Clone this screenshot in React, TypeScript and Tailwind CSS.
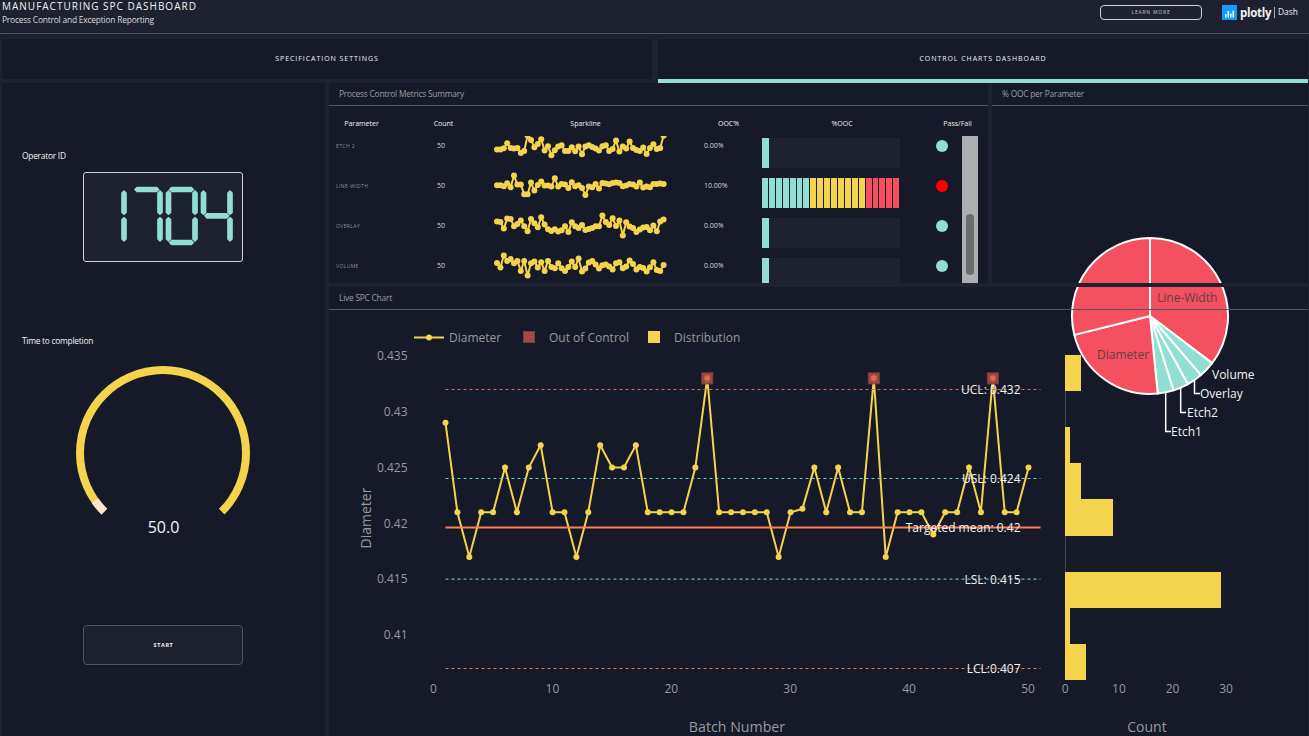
import React from "react";

const AQUA = "#91dfd2";
const YELLOW = "#f4d44d";
const RED = "#f45060";

/* ---------- data ---------- */

type Metric = { name: string; ooc: string; level: number; pass: boolean; points: number[] };

const METRICS: Metric[] = [
  {
    name: "ETCH 2", ooc: "0.00%", level: 1, pass: true,
    points: [207, 207, 203, 188, 202, 204, 202, 217, 211, 165, 178, 200, 190, 176, 210, 197, 224, 209, 198, 194, 211, 211, 200, 212, 198, 221, 198, 194, 199, 204, 210, 197, 194, 211, 205, 180, 213, 198, 204, 183, 202, 208, 211, 201, 220, 202, 191, 205, 202, 165].map((v) => v - 198),
  },
  {
    name: "LINE-WIDTH", ooc: "10.00%", level: 20, pass: false,
    points: [314, 314, 317, 308, 320, 285, 312, 312, 341, 341, 306, 330, 313, 303, 315, 315, 318, 293, 318, 310, 312, 322, 305, 317, 314, 322, 343, 318, 320, 310, 324, 307, 309, 311, 307, 306, 307, 317, 315, 310, 312, 318, 306, 321, 318, 320, 310, 310, 309, 310].map((v) => v - 318),
  },
  {
    name: "OVERLAY", ooc: "0.00%", level: 1, pass: true,
    points: [423, 424, 444, 414, 415, 437, 430, 420, 437, 452, 415, 428, 440, 410, 432, 446, 451, 446, 453, 449, 437, 454, 425, 437, 442, 433, 448, 445, 442, 437, 437, 405, 424, 433, 413, 436, 420, 465, 425, 438, 442, 454, 447, 441, 439, 449, 435, 452, 423, 417].map((v) => v - 438),
  },
  {
    name: "VOLUME", ooc: "0.00%", level: 1, pass: true,
    points: [547, 561, 525, 541, 535, 548, 541, 571, 541, 585, 548, 543, 561, 545, 571, 541, 559, 563, 548, 563, 571, 559, 543, 559, 534, 573, 564, 546, 541, 552, 564, 554, 552, 558, 567, 548, 545, 563, 558, 540, 550, 567, 559, 562, 573, 560, 545, 568, 571, 553].map((v) => v - 558),
  },
];

const DIAMETER = [
  0.429, 0.421, 0.417, 0.421, 0.421, 0.425, 0.421, 0.425, 0.427, 0.421,
  0.421, 0.417, 0.421, 0.427, 0.425, 0.425, 0.427, 0.421, 0.421, 0.421,
  0.421, 0.425, 0.433, 0.421, 0.421, 0.421, 0.421, 0.421, 0.417, 0.421,
  0.4213, 0.425, 0.421, 0.425, 0.421, 0.421, 0.433, 0.417, 0.421, 0.421,
  0.421, 0.419, 0.421, 0.421, 0.425, 0.421, 0.433, 0.421, 0.421, 0.425,
];

const BINS = [
  [355, 36, 16], [427, 36, 5], [463, 36, 16], [499, 37, 48],
  [572, 36, 156], [608, 36, 5], [644, 36, 21],
];

const Y_TICKS: [string, number][] = [
  ["0.435", 360], ["0.43", 416], ["0.425", 472], ["0.42", 528], ["0.415", 583], ["0.41", 639],
];

const LIMITS = [
  { y: 389.5, color: "#d56a50", label: "UCL: 0.432" },
  { y: 478.5, color: "#84cac0", label: "USL: 0.424" },
  { y: 579.2, color: "#6fb0a9", label: "LSL: 0.415" },
  { y: 668.5, color: "#f0714f", label: "LCL:0.407" },
];

/* ---------- small pieces ---------- */

function Sparkline({ points }: { points: number[] }) {
  const xy = points.map((v, i) => [5 + i * 3.4, 20.6 + v / 3]);
  return (
    <svg width="178" height="40" className="ml-[10px] block overflow-visible">
      <polyline points={xy.map((p) => p.join(",")).join(" ")} fill="none" stroke={YELLOW} strokeWidth="2" />
      {xy.map((p, i) => (
        <circle key={i} cx={p[0]} cy={p[1]} r="3" fill={YELLOW} />
      ))}
    </svg>
  );
}

function LevelBar({ level }: { level: number }) {
  if (level === 1) {
    return (
      <div className="h-[30px] w-[138px] bg-[#1e2130]">
        <div className="h-full w-[7px] bg-[#91dfd2]" />
      </div>
    );
  }
  return (
    <div className="flex h-[30px] w-[137px] gap-px">
      {Array.from({ length: 20 }, (_, i) => (
        <div
          key={i}
          className={i < 7 ? "flex-1 bg-[#91dfd2]" : i < 15 ? "flex-1 bg-[#f4d44d]" : "flex-1 bg-[#f45060]"}
        />
      ))}
    </div>
  );
}

function PanelTitle({ children, className = "" }: { children: React.ReactNode; className?: string }) {
  return (
    <div className={`flex h-[23px] shrink-0 items-center border-b border-[#4f5461] pl-[10px] text-[8.4px] tracking-[-0.23px] text-[#9b9c9f] ${className}`}>
      {children}
    </div>
  );
}

const hSeg = (x: number, y: number) =>
  `M${x} ${y} l8 -8.5 h61 l8 8.5 l-8 8.5 h-61 z`;
const vSeg = (x: number, y: number) =>
  `M${x} ${y} l8.5 8 v60 l-8.5 8 l-8.5 -8 v-60 z`;

function LedDisplay() {
  return (
    <svg viewBox="72 99 474 264" className="h-full w-full">
      <g fill={AQUA}>
        <path d={vSeg(192, 150)} /><path d={vSeg(192, 230)} />
        <path d={hSeg(222, 148.5)} /><path d={vSeg(300, 150)} /><path d={vSeg(300, 230)} />
        <path d={hSeg(326, 148.5)} /><path d={vSeg(405, 150)} /><path d={vSeg(405, 230)} />
        <path d={vSeg(325.5, 150)} /><path d={vSeg(325.5, 230)} /><path d={hSeg(326, 307.5)} />
        <path d={vSeg(430.5, 150)} /><path d={hSeg(432, 227.5)} /><path d={vSeg(510, 150)} /><path d={vSeg(510, 230)} />
      </g>
      <g fill="#1a1d2b">
        <circle cx="180" cy="227" r="1.5" /><circle cx="120" cy="227" r="1.5" />
        <circle cx="227" cy="237" r="1.5" /><circle cx="229" cy="300" r="1.5" />
      </g>
    </svg>
  );
}

function arc(cx: number, cy: number, r: number, from: number, to: number) {
  const p = (a: number) => {
    const t = (a * Math.PI) / 180;
    return `${cx + r * Math.cos(t)} ${cy + r * Math.sin(t)}`;
  };
  return `M${p(from)} A${r} ${r} 0 ${to - from > 180 ? 1 : 0} 1 ${p(to)}`;
}

function Gauge() {
  return (
    <svg width="180" height="180" className="mx-auto block">
      <path d={arc(90, 90, 83, 135, 405)} fill="none" stroke={YELLOW} strokeWidth="8" />
      <path d={arc(90, 90, 83, 135, 145)} fill="none" stroke="#fae7d0" strokeWidth="8" />
      <text x="90.5" y="170" textAnchor="middle" fontSize="16" fill="#f2f2f2">50.0</text>
    </svg>
  );
}

const SLICES = [
  { from: 0, to: 127.2, color: RED },
  { from: 127.2, to: 139.2, color: AQUA },
  { from: 139.2, to: 150.9, color: AQUA },
  { from: 150.9, to: 162.5, color: AQUA },
  { from: 162.5, to: 174.3, color: AQUA },
  { from: 174.3, to: 256, color: RED },
  { from: 256, to: 360, color: RED },
];

function Pie() {
  return (
    <svg viewBox="1040 225 269 230" width="269" height="230" className="block">
      {SLICES.map((s) => (
        <path
          key={s.from}
          d={`${arc(1150, 316, 78, s.from - 90, s.to - 90)} L1150 316 Z`}
          fill={s.color}
          stroke="#fff"
          strokeWidth="2"
          strokeLinejoin="round"
        />
      ))}
      <g fill="none" stroke="#fff" strokeWidth="1.5">
        <path d="M1194.5 380.5V393.5H1200" />
        <path d="M1180.7 387V412.5H1186" />
        <path d="M1165.7 393V431.5H1171" />
      </g>
      <g fontSize="12">
        <text x="1157" y="302" fill="#5c4440">Line-Width</text>
        <text x="1097" y="359" fill="#5c4440">Diameter</text>
        <g fill="#f2f2f2">
          <text x="1212" y="379">Volume</text>
          <text x="1200" y="398">Overlay</text>
          <text x="1187" y="417">Etch2</text>
          <text x="1171" y="436">Etch1</text>
        </g>
      </g>
    </svg>
  );
}

function SpcChart() {
  const pts = DIAMETER.map((v, i) => [445.5 + i * 11.898, 355.7 + (0.435 - v) * 11180]);
  return (
    <svg viewBox="329 310 980 426" width="980" height="426" className="block">
      <g fontSize="12" fill="#98999c">
        <path d="M414 337.5H444" stroke={YELLOW} strokeWidth="2" />
        <circle cx="429" cy="337.5" r="3" fill={YELLOW} />
        <text x="449" y="342">Diameter</text>
        <rect x="523.5" y="331.5" width="11" height="11" fill="#a04a49" stroke="#7b3c40" />
        <text x="549" y="342">Out of Control</text>
        <rect x="648" y="331" width="12" height="12" fill={YELLOW} />
        <text x="674" y="342">Distribution</text>
        {Y_TICKS.map(([t, y]) => (
          <text key={t} x="407.5" y={y} textAnchor="end">{t}</text>
        ))}
        {[0, 10, 20, 30, 40, 50].map((t) => (
          <text key={t} x={433.5 + t * 11.89} y="693" textAnchor="middle">{t}</text>
        ))}
        {[0, 10, 20, 30].map((t) => (
          <text key={t} x={1065.3 + t * 5.36} y="693" textAnchor="middle">{t}</text>
        ))}
      </g>
      <g fontSize="14" fill="#98999c" textAnchor="middle">
        <text x="737" y="732" fontSize="14.2">Batch Number</text>
        <text x="1147" y="732">Count</text>
        <text transform="translate(371 518) rotate(-90)">Diameter</text>
      </g>
      <path d="M1065.5 355V680" stroke="#44464d" />
      {BINS.map(([y, h, w]) => (
        <rect key={y} x="1065" y={y} width={w} height={h} fill={YELLOW} />
      ))}
      <polyline points={pts.map((p) => p.join(",")).join(" ")} fill="none" stroke={YELLOW} strokeWidth="2" />
      {pts.map((p, i) => (
        <circle key={i} cx={p[0]} cy={p[1]} r="3" fill={YELLOW} />
      ))}
      {[22, 36, 46].map((i) => (
        <g key={i}>
          <rect x={pts[i][0] - 5.5} y={pts[i][1] - 5.2} width="11" height="11" fill="#a04a49" fillOpacity="0.95" stroke="#7b3c40" />
          <circle cx={pts[i][0]} cy={pts[i][1]} r="2.8" fill="#e0684f" />
        </g>
      ))}
      {LIMITS.map((l) => (
        <path key={l.label} d={`M445.5 ${l.y}H1040.5`} stroke={l.color} strokeWidth="1.2" strokeDasharray="3 3" />
      ))}
      <path d="M445.5 527.5H1040.5" stroke="#ff7f50" strokeWidth="2" />
      <g fontSize="12" fill="#f2f2f2" textAnchor="end">
        {LIMITS.map((l) => (
          <text key={l.label} x="1020.5" y={Math.round(l.y + 4.4)}>{l.label}</text>
        ))}
        <text x="1020.5" y="532">Targeted mean: 0.42</text>
      </g>
    </svg>
  );
}

/* ---------- page ---------- */

export default function App() {
  return (
    <div className="flex h-[736px] w-[1309px] flex-col overflow-hidden bg-[#1e2130] font-['Open_Sans',sans-serif] text-[#f2f2f2]">
      <header className="flex h-[34px] shrink-0 justify-between border-b border-[#4f5461] pr-[11px] pl-[2px]">
        <div>
          <h1 className="text-[10px] leading-[13px] tracking-[1px]">MANUFACTURING SPC DASHBOARD</h1>
          <p className="text-[8.4px] leading-[14px] tracking-[-0.19px] text-[#dcdcdd]">Process Control and Exception Reporting</p>
        </div>
        <div className="flex h-[25px] items-center">
          <button className="mr-[20px] h-[15px] w-[102px] rounded-[4px] border border-[#d3d3d3] text-[5px] leading-[13px] tracking-[0.8px] text-[#c5c5c6]">
            LEARN MORE
          </button>
          <svg width="15" height="15" className="mr-[3px]">
            <rect width="15" height="15" fill="#119dff" />
            <path d="M3 9h1.5v3.5H3zM5.5 6H7v6.5H5.5zM8 8.5h1.5v4H8zM10.5 5.5H12v7h-1.5z" fill="#fff" />
          </svg>
          <span className="w-[31px] text-[11.5px] leading-none font-bold tracking-[-0.3px]">plotly</span>
          <span className="mr-[3px] ml-[3px] h-[11px] w-px bg-[#b0b1b6]" />
          <span className="w-[20px] text-[8.4px] leading-none">Dash</span>
        </div>
      </header>

      <nav className="mt-[5px] flex h-[44px] shrink-0 gap-[6px] pl-[2px] text-[7px] font-medium tracking-[0.95px]">
        <div className="flex w-[650px] items-center justify-center border-b-4 border-transparent bg-[#161a28] bg-clip-padding">
          SPECIFICATION SETTINGS
        </div>
        <div className="flex w-[650px] items-center justify-center border-b-4 border-[#91dfd2] bg-[#161a28]">
          CONTROL CHARTS DASHBOARD
        </div>
      </nav>

      <main className="flex min-h-0 flex-1 gap-[4px] pl-[2px]">
        <aside className="flex w-[323px] shrink-0 flex-col bg-[#161a28]">
          <p className="mt-[66px] h-[14px] pl-[20px] text-[8.4px] leading-[14px] tracking-[-0.25px]">Operator ID</p>
          <div className="mt-[9px] ml-[81px] h-[90px] w-[160px] rounded-[3px] border border-[#d3d3d3] bg-[#1e2130]">
            <LedDisplay />
          </div>
          <p className="mt-[72px] h-[14px] pl-[20px] text-[8.4px] leading-[14px] tracking-[-0.25px]">Time to completion</p>
          <div className="mt-[15px] h-[180px] w-[322px]">
            <Gauge />
          </div>
          <button className="mt-[82px] ml-[81px] h-[40px] w-[160px] rounded-[4px] border border-[#4b5460] bg-[#1d202d] pl-px text-[5.5px] font-bold tracking-[0.6px]">
            START
          </button>
        </aside>

        <div className="flex min-w-0 flex-1 flex-col">
          <div className="flex h-[200px] shrink-0 gap-[4px]">
            <section className="flex w-[659px] shrink-0 flex-col bg-[#161a28]">
              <PanelTitle>Process Control Metrics Summary</PanelTitle>
              <div className="flex h-[30px] w-[659px] shrink-0 items-center pt-[6px] text-center text-[7px] font-medium">
                <span className="w-[65px] shrink-0">Parameter</span>
                <span className="w-[99px] shrink-0">Count</span>
                <span className="w-[185px] shrink-0">Sparkline</span>
                <span className="w-[101px] shrink-0">OOC%</span>
                <span className="w-[126px] shrink-0">%OOC</span>
                <span className="-mr-[22px] w-[105px] shrink-0">Pass/Fail</span>
              </div>
              <div className="flex min-h-0 flex-1 overflow-hidden">
                <div className="-mt-[10px] w-[633px] shrink-0">
                  {METRICS.map((m) => (
                    <div key={m.name} className="flex h-[40px] items-center text-[7px]">
                      <span className="w-[72px] pt-px pl-[7px] text-[5px] font-medium tracking-[0.4px] text-[#909297]">{m.name}</span>
                      <span className="w-[80px] text-center text-[#d8d8da]">50</span>
                      <div className="w-[208px] pl-[1px]"><Sparkline points={m.points} /></div>
                      <span className="w-[73px] pl-[15px] text-[#d8d8da]">{m.ooc}</span>
                      <div className="w-[160px] pt-[14px]"><LevelBar level={m.level} /></div>
                      <div className="flex w-[40px] justify-center">
                        <span className={m.pass ? "size-[12px] rounded-full bg-[#91dfd2]" : "size-[12px] rounded-full bg-[#ff0000]"} />
                      </div>
                    </div>
                  ))}
                </div>
                <div className="flex w-[16px] shrink-0 justify-center bg-[#adaeb2]">
                  <div className="mt-[78px] h-[61px] w-[8px] rounded-full bg-[#6c6d71]" />
                </div>
              </div>
            </section>

            <section className="relative w-[316px] shrink-0 bg-[#161a28]">
              <PanelTitle>% OOC per Parameter</PanelTitle>
              <div className="absolute top-[142px] left-[48px] z-10">
                <Pie />
              </div>
            </section>
          </div>

          <section className="mr-px flex flex-1 flex-col overflow-hidden bg-[#161a28]">
            <PanelTitle className="relative z-20 h-[27px] border-t-4 border-t-[#1e2130]">Live SPC Chart</PanelTitle>
            <SpcChart />
          </section>
        </div>
      </main>
    </div>
  );
}
